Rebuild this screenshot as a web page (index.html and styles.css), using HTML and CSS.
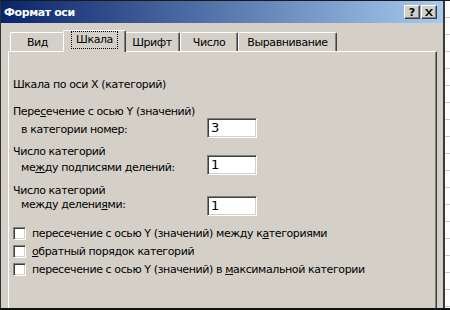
FILE: index.html
```html
<!DOCTYPE html>
<html lang="ru">
<head>
    <meta charset="UTF-8">
    <meta name="viewport" content="width=device-width, initial-scale=1.0">
    <title>Формат оси</title>
    <link rel="stylesheet" href="styles.css">
</head>
<body>
    <div class="screen">
        <div class="dialog">
            <div class="titlebar">
                <span class="title">Формат оси</span>
                <div class="title-buttons">
                    <button class="tb-btn tb-help">?</button>
                    <button class="tb-btn tb-close">
                        <svg width="8" height="7" viewBox="0 0 8 7">
                            <path d="M0 0h2l2 2.5L6 0h2L5 3.5 8 7H6L4 4.5 2 7H0l3-3.5z" fill="#000"/>
                        </svg>
                    </button>
                </div>
            </div>

            <div class="dialog-body">
                <div class="tabs">
                    <div class="tab tab-vid">Вид</div>
                    <div class="tab tab-scale active"><span class="focus">Шкала</span></div>
                    <div class="tab tab-font">Шрифт</div>
                    <div class="tab tab-num">Число</div>
                    <div class="tab tab-align">Выравнивание</div>
                </div>

                <div class="panel">
                    <div class="heading">Шкала по оси X (категорий)</div>

                    <div class="line line-cross">Пере<u>с</u>ечение с осью Y (значений)</div>
                    <div class="field field-cross">
                        <span class="field-label">в категории номер:</span>
                        <div class="edit">3</div>
                    </div>

                    <div class="line line-labels">Число категорий</div>
                    <div class="field field-labels">
                        <span class="field-label">ме<u>ж</u>ду подписями делений:</span>
                        <div class="edit">1</div>
                    </div>

                    <div class="line line-ticks">Число категорий</div>
                    <div class="field field-ticks">
                        <span class="field-label">между делени<u>я</u>ми:</span>
                        <div class="edit">1</div>
                    </div>

                    <div class="checks">
                        <div class="check-row">
                            <span class="checkbox"></span>
                            <span>пересечение с осью Y (значений) между к<u>а</u>тегориями</span>
                        </div>
                        <div class="check-row">
                            <span class="checkbox"></span>
                            <span><u>о</u>братный порядок категорий</span>
                        </div>
                        <div class="check-row">
                            <span class="checkbox"></span>
                            <span>пересечение с осью Y (значений) в <u>м</u>аксимальной категории</span>
                        </div>
                    </div>
                </div>
            </div>
        </div>

        <div class="sheet"></div>
    </div>
</body>
</html>
```

FILE: styles.css
```css
:root {
    --face: #d4d0c8;
    --shadow: #808080;
    --dark: #404040;
    --light: #ffffff;
}

* {
    margin: 0;
    padding: 0;
    box-sizing: border-box;
}

body {
    background: #fff;
    font-family: 'DejaVu Sans', sans-serif;
    font-size: 11px;
    letter-spacing: -0.4px;
    color: #000;
}

.screen {
    display: flex;
    width: 450px;
    height: 310px;
    overflow: hidden;
    border-top: 1px solid #1a1a1a;
    border-bottom: 2px solid #111;
}

.dialog {
    width: 445px;
    flex-shrink: 0;
    background: var(--face);
    border-left: 1px solid #333;
    border-right: 2px solid #3a3a3a;
}

/* title bar */

.titlebar {
    height: 22px;
    display: flex;
    align-items: center;
    justify-content: space-between;
    padding: 0 6px 0 3px;
    background: linear-gradient(to right, #0a246a, #a6caf0);
}

.title {
    color: #fff;
    font-weight: bold;
    font-size: 11px;
}

.title-buttons {
    display: flex;
}

.tb-btn {
    width: 16px;
    height: 14px;
    display: flex;
    align-items: center;
    justify-content: center;
    background: var(--face);
    border: 1px solid;
    border-color: var(--light) var(--dark) var(--dark) var(--light);
    box-shadow: inset -1px -1px var(--shadow);
    font-family: 'DejaVu Sans', sans-serif;
    font-weight: bold;
    font-size: 11px;
    line-height: 1;
    color: #000;
}

.tb-help {
    margin-right: 1px;
}

/* tabs */

.dialog-body {
    padding: 7px 6px 0 7px;
}

.tabs {
    display: flex;
    align-items: flex-end;
    height: 21px;
    padding-left: 2px;
}

.tab {
    height: 19px;
    display: flex;
    align-items: center;
    justify-content: center;
    border-top: 1px solid var(--light);
    border-left: 1px solid var(--light);
    border-right: 1px solid var(--dark);
    border-radius: 2px 2px 0 0;
    box-shadow: inset -1px 0 var(--shadow);
    background: var(--face);
}

.tab-vid { width: 55px; }
.tab-scale { width: 59px; }
.tab-font { width: 56px; }
.tab-num { width: 58px; }
.tab-align { width: 99px; }

.tab.active {
    position: relative;
    z-index: 1;
    width: 63px;
    height: 22px;
    margin: 0 -2px -1px;
    padding-bottom: 3px;
}

.focus {
    border: 1px dotted #000;
    padding: 1px 4px 2px;
}

/* panel */

.panel {
    height: 300px;
    padding: 26px 0 0 4px;
    border-top: 1px solid var(--light);
    border-left: 1px solid var(--light);
    border-right: 1px solid var(--dark);
    box-shadow: inset -1px 0 var(--shadow);
    line-height: 13px;
}

.line-cross { margin-top: 14px; }
.line-labels { margin-top: 9px; }
.line-ticks { margin-top: 10px; }

.field {
    display: flex;
    align-items: flex-start;
    height: 13px;
}

.field-label {
    width: 194px;
    padding-left: 8px;
}

.field-cross { margin-top: 5px; }
.field-labels { margin-top: 3px; }
.field-ticks { margin-top: 1px; }

.field-cross .edit { margin-top: -5px; }
.field-labels .edit { margin-top: -6px; }
.field-ticks .edit { margin-top: -2px; }

.edit {
    width: 50px;
    height: 20px;
    flex-shrink: 0;
    background: #fff;
    border: 1px solid;
    border-color: var(--shadow) var(--light) var(--light) var(--shadow);
    box-shadow: inset 1px 1px var(--dark), inset -1px -1px var(--face);
    padding-left: 3px;
    font-size: 13px;
    line-height: 18px;
    letter-spacing: 0;
}

.checks {
    margin-top: 13px;
}

.check-row {
    display: flex;
    align-items: center;
    gap: 6px;
    height: 18px;
}

.checkbox {
    width: 13px;
    height: 13px;
    flex-shrink: 0;
    background: #fff;
    border: 1px solid;
    border-color: var(--shadow) var(--light) var(--light) var(--shadow);
    box-shadow: inset 1px 1px var(--dark), inset -1px -1px var(--face);
}

/* spreadsheet behind the dialog */

.sheet {
    flex: 1;
    background: repeating-linear-gradient(to bottom, #fff 0, #fff 16px, #c8c8c8 16px, #c8c8c8 17px);
}
```
